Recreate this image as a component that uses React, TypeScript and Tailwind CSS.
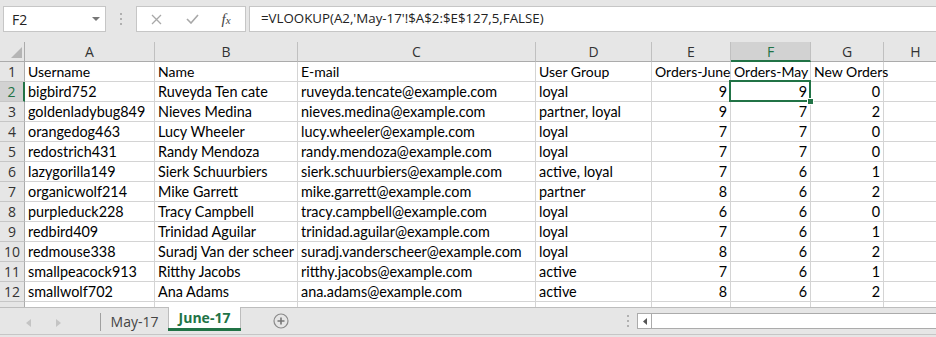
import React from "react";

const rows: string[][] = [
  ["Username", "Name", "E-mail", "User Group", "Orders-June", "Orders-May", "New Orders"],
  ["bigbird752", "Ruveyda Ten cate", "ruveyda.tencate@example.com", "loyal", "9", "9", "0"],
  ["goldenladybug849", "Nieves Medina", "nieves.medina@example.com", "partner, loyal", "9", "7", "2"],
  ["orangedog463", "Lucy Wheeler", "lucy.wheeler@example.com", "loyal", "7", "7", "0"],
  ["redostrich431", "Randy Mendoza", "randy.mendoza@example.com", "loyal", "7", "7", "0"],
  ["lazygorilla149", "Sierk Schuurbiers", "sierk.schuurbiers@example.com", "active, loyal", "7", "6", "1"],
  ["organicwolf214", "Mike Garrett", "mike.garrett@example.com", "partner", "8", "6", "2"],
  ["purpleduck228", "Tracy Campbell", "tracy.campbell@example.com", "loyal", "6", "6", "0"],
  ["redbird409", "Trinidad Aguilar", "trinidad.aguilar@example.com", "loyal", "7", "6", "1"],
  ["redmouse338", "Suradj Van der scheer", "suradj.vanderscheer@example.com", "loyal", "8", "6", "2"],
  ["smallpeacock913", "Ritthy Jacobs", "ritthy.jacobs@example.com", "active", "7", "6", "1"],
  ["smallwolf702", "Ana Adams", "ana.adams@example.com", "active", "8", "6", "2"],
];

const widths = ["w-[130px]", "w-[143px]", "w-[238px]", "w-[116px]", "w-[79px]", "w-[80px]", "w-[73px]", "w-[64px]"];
const letters = ["A", "B", "C", "D", "E", "F", "G", "H"];

const cellFont = { fontFamily: "Lato, 'Open Sans', sans-serif" };
const uiFont = { fontFamily: "'Open Sans', 'Noto Sans', sans-serif" };

function Dots() {
  return (
    <div className="flex flex-col gap-[3px]">
      <div className="w-[2px] h-[2px] bg-[#b0b0b0]" />
      <div className="w-[2px] h-[2px] bg-[#b0b0b0]" />
      <div className="w-[2px] h-[2px] bg-[#b0b0b0]" />
    </div>
  );
}

export default function App() {
  return (
    <div className="w-[936px] h-[337px] overflow-hidden bg-[#e6e6e6] flex flex-col" style={uiFont}>
      {/* Formula bar */}
      <div className="h-[42px] flex items-start pt-[6px] shrink-0">
        <div className="ml-[3px] w-[103px] h-[26px] bg-white border border-[#c6c6c6] flex items-center justify-between pl-[8px] pr-[5px]">
          <span className="text-[14px] text-[#222]">F2</span>
          <svg width="8" height="5" viewBox="0 0 8 5"><path d="M0 0h8L4 4z" fill="#777" /></svg>
        </div>
        <div className="w-[30px] h-[26px] flex items-center justify-center">
          <Dots />
        </div>
        <div className="w-[110px] h-[26px] bg-white border border-[#c6c6c6] flex items-center">
          <div className="w-[38px] flex justify-center">
            <svg width="11" height="11" viewBox="0 0 11 11"><path d="M1 1l9 9M10 1l-9 9" stroke="#a8a8a8" strokeWidth="1.3" /></svg>
          </div>
          <div className="w-[34px] flex justify-center">
            <svg width="13" height="10" viewBox="0 0 13 10"><path d="M1 5l4 4 7-8" stroke="#a8a8a8" strokeWidth="1.6" fill="none" /></svg>
          </div>
          <div className="w-[34px] flex justify-center">
            <span className="text-[15px] italic text-[#444]" style={{ fontFamily: "'Liberation Serif', serif" }}>
              f<span className="text-[11px]">x</span>
            </span>
          </div>
        </div>
        <div className="ml-[3px] flex-1 h-[26px] bg-white border border-[#c6c6c6] border-r-0 flex items-center pl-[11px]">
          <span className="text-[13.3px] text-[#222] whitespace-nowrap">=VLOOKUP(A2,'May-17'!$A$2:$E$127,5,FALSE)</span>
        </div>
      </div>

      {/* Grid */}
      <div className="flex flex-col shrink-0 bg-white">
        {/* column headers */}
        <div className="flex h-[20px] bg-[#e6e6e6]">
          <div className="w-[25px] h-[20px] border-r border-b border-[#ababab] relative shrink-0">
            <svg className="absolute right-[2px] bottom-[3px]" width="11" height="11" viewBox="0 0 11 11"><path d="M11 0v11H0z" fill="#b5b5b5" /></svg>
          </div>
          {letters.map((l, i) => (
            <div
              key={l}
              className={`${widths[i]} shrink-0 h-[20px] flex items-center justify-center text-[14px] border-r ${
                l === "F"
                  ? "bg-[#d2d2d2] text-[#217346] border-b-2 border-b-[#217346] border-r-[#c0c0c0]"
                  : "text-[#333] border-b border-b-[#ababab] border-r-[#c0c0c0]"
              }`}
            >
              {l}
            </div>
          ))}
        </div>
        {rows.map((r, ri) => (
          <div key={ri} className="flex h-[20px]">
            <div
              className={`w-[25px] shrink-0 h-[20px] flex items-center justify-center text-[14px] border-b border-[#c6c6c6] ${
                ri === 1
                  ? "bg-[#d2d2d2] text-[#217346] border-r-2 border-r-[#217346]"
                  : "bg-[#e6e6e6] text-[#333] border-r border-r-[#ababab]"
              }`}
            >
              {ri + 1}
            </div>
            {letters.map((l, ci) => {
              const v = ci < 7 ? r[ci] : "";
              const num = ri > 0 && ci >= 4 && ci < 7;
              const sel = ri === 1 && ci === 5;
              return (
                <div
                  key={l}
                  className={`${widths[ci]} shrink-0 h-[20px] border-r border-b border-[#d4d4d4] relative ${sel ? "z-10" : ""}`}
                  style={cellFont}
                >
                  <div
                    className={`absolute inset-0 flex items-center text-black whitespace-nowrap ${
                      ri === 0 ? "text-[14px]" : "text-[14.4px]"
                    } ${num ? "justify-end pr-[3px]" : "pl-[3px]"}`}
                  >
                    {v}
                  </div>
                  {sel && (
                    <>
                      <div className="absolute left-[-2px] top-[-2px] right-[-1px] bottom-[-1px] border-2 border-[#217346]" />
                      <div className="absolute right-[-4px] bottom-[-4px] w-[7px] h-[7px] bg-[#217346] border border-white" />
                    </>
                  )}
                </div>
              );
            })}
          </div>
        ))}
        {/* partial row 13 */}
        <div className="flex h-[5px]">
          <div className="w-[25px] shrink-0 bg-[#e6e6e6] border-r border-[#ababab]" />
          {widths.map((w, i) => (
            <div key={i} className={`${w} shrink-0 border-r border-[#d4d4d4]`} />
          ))}
        </div>
      </div>

      {/* Sheet tabs */}
      <div className="flex-1 flex items-stretch border-t border-[#bdbdbd] bg-[#e6e6e6] relative">
        <div className="w-[100px] flex items-center pl-[26px] gap-[25px]">
          <svg width="5" height="8" viewBox="0 0 5 8"><path d="M5 0v8L0 4z" fill="#c4c4c4" /></svg>
          <svg width="5" height="8" viewBox="0 0 5 8"><path d="M0 0v8l5-4z" fill="#c4c4c4" /></svg>
        </div>
        <div className="w-[1px] h-[18px] mt-[5px] bg-[#a0a0a0]" />
        <div className="w-[67px] flex items-center justify-center text-[14px] text-[#444] pb-[3px]">May-17</div>
        <div className="w-[73px] h-[24px] bg-white border-x border-[#bdbdbd] flex flex-col -mt-px">
          <div className="flex-1 flex items-center justify-center text-[14px] font-bold text-[#217346]">June-17</div>
          <div className="h-[3px] bg-[#217346] mx-[-1px]" />
        </div>
        <div className="w-[80px] flex items-center justify-center pb-[3px]">
          <svg width="16" height="16" viewBox="0 0 16 16">
            <circle cx="8" cy="8" r="7" fill="none" stroke="#8a8a8a" strokeWidth="1.2" />
            <path d="M8 4.5v7M4.5 8h7" stroke="#777" strokeWidth="1.6" />
          </svg>
        </div>
        <div className="w-[297px]" />
        <div className="w-[19px] flex items-center justify-center pb-[3px]">
          <Dots />
        </div>
        <div className="flex-1 flex items-start pt-[5px]">
          <div className="flex-1 h-[16px] bg-white border border-[#ababab] border-r-0 flex">
            <div className="w-[14px] h-full border-r border-[#ababab] flex items-center justify-center">
              <svg width="4" height="7" viewBox="0 0 4 7"><path d="M4 0v7L0 3.5z" fill="#555" /></svg>
            </div>
          </div>
        </div>
        <div className="absolute left-0 right-0 bottom-[2px] h-px bg-[#c6c6c6]" />
      </div>
    </div>
  );
}
